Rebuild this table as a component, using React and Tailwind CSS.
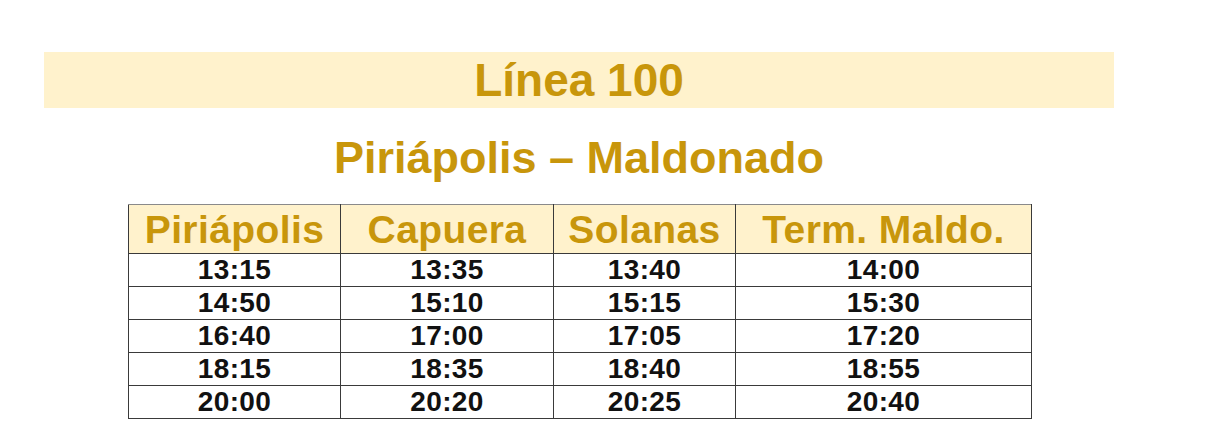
export default function App() {
  const headers = ["Piriápolis", "Capuera", "Solanas", "Term. Maldo."];
  const widths = ["w-[212px]", "w-[213px]", "w-[182px]", "w-[296px]"];
  const rows = [
    ["13:15", "13:35", "13:40", "14:00"],
    ["14:50", "15:10", "15:15", "15:30"],
    ["16:40", "17:00", "17:05", "17:20"],
    ["18:15", "18:35", "18:40", "18:55"],
    ["20:00", "20:20", "20:25", "20:40"],
  ];
  return (
    <div className="w-[1215px] h-[448px] bg-white pt-[52px] font-['Liberation_Sans',Arial,sans-serif]">
      <div className="ml-[44px] w-[1070px] h-[56px] bg-[#fff2cc] flex items-center justify-center">
        <span className="text-[46px] leading-none font-bold text-[#c8960b]">Línea 100</span>
      </div>
      <div className="ml-[44px] w-[1070px] mt-[28px] text-center text-[45px] leading-[44px] font-bold text-[#c8960b]">
        Piriápolis – Maldonado
      </div>
      <table className="ml-[128px] mt-[24px] border-collapse table-fixed w-[904px]">
        <thead>
          <tr className="h-[49px] bg-[#fff2cc]">
            {headers.map((h, i) => (
              <th
                key={h}
                className={`${widths[i]} border border-[#3a3a3a] border-t-[#8a8a8a] p-0 text-center text-[39px] leading-none font-bold text-[#c8960b] tracking-[0.4px]`}
              >
                {h}
              </th>
            ))}
          </tr>
        </thead>
        <tbody>
          {rows.map((r, ri) => (
            <tr key={ri} className="h-[33px]">
              {r.map((c, ci) => (
                <td
                  key={ci}
                  className="border border-[#3a3a3a] p-0 text-center text-[28px] leading-none font-bold text-[#111] tracking-[0.4px]"
                >
                  {c}
                </td>
              ))}
            </tr>
          ))}
        </tbody>
      </table>
    </div>
  );
}
